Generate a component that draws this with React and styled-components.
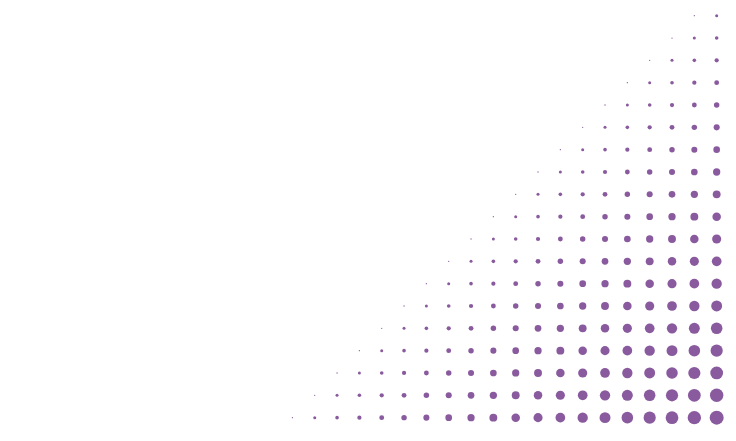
import React from 'react';
import styled, { createGlobalStyle } from 'styled-components';

const GlobalStyle = createGlobalStyle`
  html, body {
    margin: 0;
    padding: 0;
    background: #fff;
    font-family: 'Liberation Sans', Arial, sans-serif;
  }
`;

const Page = styled.div`
  width: 736px;
  height: 441px;
  overflow: hidden;
  background: #fff;
`;

const Pattern = styled.svg`
  display: block;
  width: 736px;
  height: 441px;
`;

const COLS = 20;
const ROWS = 19;
const STEP = 22.33;
const X0 = 292.4;
const Y0 = 15.7;

const dotSize = (c, r) => {
  const k = c + r - (ROWS - 1);
  if (k === 0) return 1.3;
  return 2.4 + k * 0.61;
};

const dots = [];
for (let r = 0; r < ROWS; r++) {
  for (let c = ROWS - 1 - r; c < COLS; c++) {
    dots.push({ key: `${r}-${c}`, x: X0 + c * STEP, y: Y0 + r * STEP, d: dotSize(c, r) });
  }
}

export default () => (
  <Page>
    <GlobalStyle />
    <Pattern viewBox="0 0 736 441">
      {dots.map((dot) => (
        <circle key={dot.key} cx={dot.x} cy={dot.y} r={dot.d / 2} fill="#8a5a9e" />
      ))}
    </Pattern>
  </Page>
);
